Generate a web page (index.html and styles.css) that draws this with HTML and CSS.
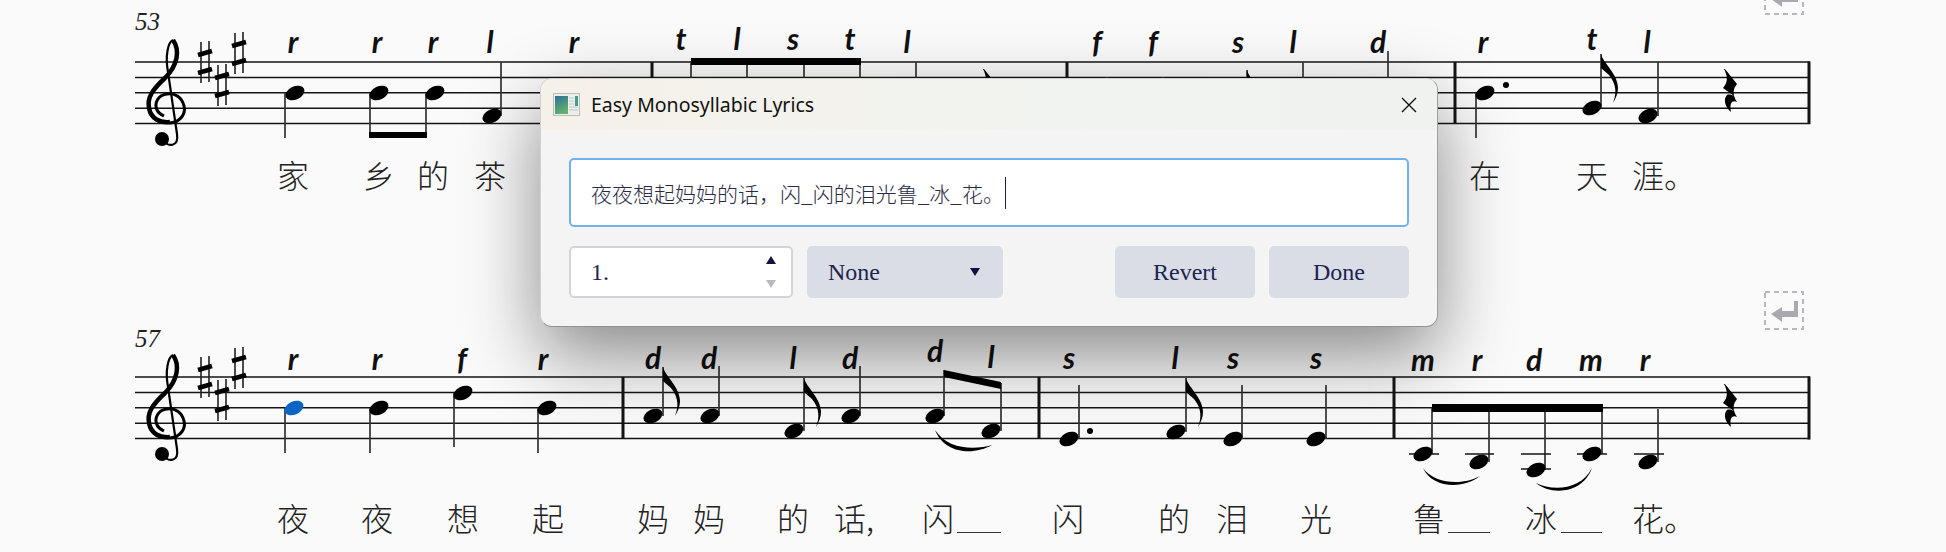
FILE: index.html
```html
<!DOCTYPE html>
<html lang="zh">

<head>
    <meta charset="UTF-8">
    <title>Easy Monosyllabic Lyrics</title>
    <link rel="stylesheet" href="styles.css">
</head>

<body>
    <!-- the score is a free canvas, everything on it sits at its own coordinates -->
    <svg class="score" width="1946" height="552" viewBox="0 0 1946 552">
        <defs>
            <ellipse id="head" rx="10" ry="6.6" transform="rotate(-25)"></ellipse>
            <path id="flag" d="M0 0C2 9 17 20 17 34C17 39 15 44 12 49C15.5 40 16 31 8 21C5 18 2 16 0 14Z"></path>
            <path id="rest" d="M0 0L1 0L13 15C9 20 8 25 13 33C9 31 5 33 7 43C1 38 -1 30 3 26C5 25 8 26 10 27L-1 19C4 13 4 8 0 0Z"></path>
            <g id="sharp">
                <path class="sharp-stem" d="M-4 -20V21M4 -21V20"></path>
                <path class="sharp-bar" d="M-7 -7L7 -11M-7 11L7 7"></path>
            </g>
            <g id="clef">
                <circle cx="162" cy="139" r="7"></circle>
                <path class="clef-thin" d="M162 139C168 148 179 147 177 134L168 72C165 56 168 42 173 40"></path>
                <path class="clef-bold" d="M173 40C180 50 178 65 165 78C152 90 147 98 149 108C151 119 160 123 170 122"></path>
                <path class="clef-mid" d="M170 123C181 122 186 113 184 106C182 97 175 93 167 94C158 95 154 103 157 110C159 114 162 115 164 116"></path>
            </g>
            <g id="return-mark">
                <rect class="return-box" x="1765" y="292" width="38" height="37"></rect>
                <path class="return-arrow" d="M1771 314L1782 307V311H1794V301H1798V317H1782V322Z"></path>
            </g>
            <g id="key">
                <use href="#clef"></use>
                <use href="#sharp" x="205" y="62"></use>
                <use href="#sharp" x="222" y="85"></use>
                <use href="#sharp" x="239" y="53"></use>
            </g>
        </defs>

        <use href="#return-mark" y="-315"></use>
        <use href="#return-mark"></use>

        <!-- system 53 -->
        <text class="measure" x="135" y="30">53</text>
        <path class="staff" d="M135 62H1810M135 77.4H1810M135 92.8H1810M135 108.2H1810M135 123.5H1810"></path>
        <use href="#key"></use>
        <path class="bar" d="M652 62V123M1067 62V123M1455 62V123M1809 61.5V124"></path>
        <path class="stem" d="M285 93V138M370 93V138M426 93V138M501 116V62"></path>
        <path class="stem" d="M691 62V90M747 62V90M804 62V90M860 62V90M916 62V90M1107 77V90M1163 77V90M1303 62V90M1388 51V90"></path>
        <path class="stem" d="M1476 93V138M1601 108V54M1658 116V62"></path>
        <path class="stem" d="M1247 70V90"></path>
        <rect x="369" y="132" width="58" height="6"></rect>
        <rect x="691" y="58" width="170" height="7"></rect>
        <use href="#rest" x="983" y="69"></use>
        <use href="#flag" x="1247" y="70"></use>
        <use href="#head" x="295" y="93"></use>
        <use href="#head" x="379" y="93"></use>
        <use href="#head" x="435" y="93"></use>
        <use href="#head" x="492" y="116"></use>
        <use href="#head" x="1485" y="93"></use>
        <circle cx="1506" cy="85" r="3"></circle>
        <use href="#head" x="1592" y="108"></use>
        <use href="#flag" x="1601" y="54"></use>
        <use href="#head" x="1648" y="116"></use>
        <use href="#rest" x="1724" y="69"></use>

        <text class="solfa" x="293" y="53">r</text>
        <text class="solfa" x="377" y="53">r</text>
        <text class="solfa" x="433" y="53">r</text>
        <text class="solfa" x="490" y="53">l</text>
        <text class="solfa" x="574" y="53">r</text>
        <text class="solfa" x="681" y="50">t</text>
        <text class="solfa" x="737" y="50">l</text>
        <text class="solfa" x="793" y="50">s</text>
        <text class="solfa" x="850" y="50">t</text>
        <text class="solfa" x="907" y="53">l</text>
        <text class="solfa" x="1097" y="53">f</text>
        <text class="solfa" x="1153" y="53">f</text>
        <text class="solfa" x="1238" y="53">s</text>
        <text class="solfa" x="1293" y="53">l</text>
        <text class="solfa" x="1378" y="53">d</text>
        <text class="solfa" x="1483" y="53">r</text>
        <text class="solfa" x="1592" y="50">t</text>
        <text class="solfa" x="1647" y="53">l</text>

        <text class="lyric" x="277" y="188">家</text>
        <text class="lyric" x="363" y="188">乡</text>
        <text class="lyric" x="417" y="188">的</text>
        <text class="lyric" x="474" y="188">茶</text>
        <text class="lyric" x="1469" y="188">在</text>
        <text class="lyric" x="1576" y="188">天</text>
        <text class="lyric" x="1632" y="188">涯。</text>

        <!-- system 57 -->
        <text class="measure" x="135" y="347">57</text>
        <path class="staff" d="M135 377H1810M135 392.4H1810M135 407.8H1810M135 423.2H1810M135 438.6H1810"></path>
        <use href="#key" y="315"></use>
        <path class="bar" d="M623 377V439M1039 377V439M1394 377V439M1809 376.5V439.5"></path>
        <path class="stem" d="M285 408V453M370 408V453M454 393V447M538 408V453"></path>
        <path class="stem" d="M663 367V416M719 366V416M804 378V431M860 366V416M944 370V416M1001 383V431M1079 385V439"></path>
        <path class="stem" d="M1186 378V432M1242 385V439M1326 385V439M1432 408V454M1489 408V462M1545 408V470M1602 408V454M1658 409V462"></path>
        <path class="ledger" d="M1409 454H1439M1465 454H1494M1521 454H1551M1521 469H1551M1577 454H1607M1634 454H1664"></path>
        <path d="M944 370L1001 382V389L944 377Z"></path>
        <rect x="1432" y="404" width="171" height="8"></rect>
        <use class="note-current" href="#head" x="294" y="408"></use>
        <use href="#head" x="379" y="408"></use>
        <use href="#head" x="463" y="393"></use>
        <use href="#head" x="547" y="408"></use>
        <use href="#head" x="653" y="416"></use>
        <use href="#flag" x="663" y="367"></use>
        <use href="#head" x="710" y="416"></use>
        <use href="#head" x="794" y="431"></use>
        <use href="#flag" x="804" y="378"></use>
        <use href="#head" x="851" y="416"></use>
        <use href="#head" x="935" y="416"></use>
        <use href="#head" x="991" y="431"></use>
        <use href="#head" x="1069" y="439"></use>
        <circle cx="1090" cy="431" r="3"></circle>
        <use href="#head" x="1176" y="432"></use>
        <use href="#flag" x="1186" y="378"></use>
        <use href="#head" x="1233" y="439"></use>
        <use href="#head" x="1316" y="439"></use>
        <use href="#head" x="1423" y="454"></use>
        <use href="#head" x="1479" y="462"></use>
        <use href="#head" x="1536" y="470"></use>
        <use href="#head" x="1592" y="454"></use>
        <use href="#head" x="1648" y="462"></use>
        <use href="#rest" x="1724" y="384"></use>
        <path d="M935 430C945 455 975 455 992 445C975 450 948 450 935 430Z"></path>
        <path d="M1423 468C1432 489 1465 489 1480 476C1465 485 1435 485 1423 468Z"></path>
        <path d="M1536 483C1550 495 1582 495 1592 468C1580 491 1552 491 1536 483Z"></path>

        <text class="solfa" x="293" y="370">r</text>
        <text class="solfa" x="377" y="370">r</text>
        <text class="solfa" x="462" y="370">f</text>
        <text class="solfa" x="543" y="370">r</text>
        <text class="solfa" x="653" y="369">d</text>
        <text class="solfa" x="709" y="369">d</text>
        <text class="solfa" x="793" y="369">l</text>
        <text class="solfa" x="850" y="369">d</text>
        <text class="solfa" x="935" y="362">d</text>
        <text class="solfa" x="991" y="368">l</text>
        <text class="solfa" x="1069" y="369">s</text>
        <text class="solfa" x="1175" y="369">l</text>
        <text class="solfa" x="1233" y="369">s</text>
        <text class="solfa" x="1316" y="369">s</text>
        <text class="solfa" x="1423" y="371">m</text>
        <text class="solfa" x="1477" y="371">r</text>
        <text class="solfa" x="1534" y="371">d</text>
        <text class="solfa" x="1591" y="371">m</text>
        <text class="solfa" x="1645" y="371">r</text>

        <text class="lyric" x="277" y="531">夜</text>
        <text class="lyric" x="361" y="531">夜</text>
        <text class="lyric" x="447" y="531">想</text>
        <text class="lyric" x="532" y="531">起</text>
        <text class="lyric" x="637" y="531">妈</text>
        <text class="lyric" x="693" y="531">妈</text>
        <text class="lyric" x="777" y="531">的</text>
        <text class="lyric" x="834" y="531">话,</text>
        <text class="lyric" x="922" y="531">闪</text>
        <text class="lyric" x="1052" y="531">闪</text>
        <text class="lyric" x="1158" y="531">的</text>
        <text class="lyric" x="1216" y="531">泪</text>
        <text class="lyric" x="1300" y="531">光</text>
        <text class="lyric" x="1413" y="531">鲁</text>
        <text class="lyric" x="1525" y="531">冰</text>
        <text class="lyric" x="1632" y="531">花。</text>
        <path class="extender" d="M957 532.5H1001M1448 532.5H1490M1561 532.5H1602"></path>
    </svg>

    <div class="dialog">
        <div class="titlebar">
            <svg class="app-icon" width="27" height="23" viewBox="0 0 27 23">
                <defs>
                    <linearGradient id="panel" x1="0" y1="0" x2="0.4" y2="1">
                        <stop offset="0" stop-color="#2f6f9a"></stop>
                        <stop offset="1" stop-color="#62b06c"></stop>
                    </linearGradient>
                </defs>
                <rect x="0" y="0" width="27" height="23" fill="#b9bdbd"></rect>
                <rect x="1" y="1" width="25" height="21" fill="#eceeea"></rect>
                <rect x="2" y="3" width="13" height="18" fill="url(#panel)"></rect>
                <rect x="22" y="3" width="3" height="10" fill="#3f9c90"></rect>
                <path d="M16 5H21M16 8H21M16 11H21M16 14H25M16 17H25" stroke="#c2c6c2" stroke-width="1.2"></path>
            </svg>
            <span class="title">Easy Monosyllabic Lyrics</span>
            <svg class="close" width="16" height="16" viewBox="0 0 16 16">
                <path d="M1 1L15 15M15 1L1 15"></path>
            </svg>
        </div>
        <div class="body">
            <div class="lyrics-input">
                <span>夜夜想起妈妈的话，闪_闪的泪光鲁_冰_花。</span><span class="caret"></span>
            </div>
            <div class="controls">
                <div class="spinner">
                    <span>1.</span>
                    <div class="spin-arrows">
                        <span class="arrow-up"></span>
                        <span class="arrow-down"></span>
                    </div>
                </div>
                <div class="combo">
                    <span>None</span>
                    <span class="combo-arrow"></span>
                </div>
                <div class="spacer"></div>
                <div class="btn">Revert</div>
                <div class="btn">Done</div>
            </div>
        </div>
    </div>
</body>

</html>
```

FILE: styles.css
```css
body {
    margin: 0;
    width: 1946px;
    height: 552px;
    overflow: hidden;
    position: relative;
    background-color: #fafafa;
    font-family: "Liberation Serif", serif;
}

.score {
    display: block;
}

.staff {
    fill: none;
    stroke: #151515;
    stroke-width: 1.5;
}

.bar {
    fill: none;
    stroke: #151515;
    stroke-width: 3;
}

.stem {
    fill: none;
    stroke: #333;
    stroke-width: 1.7;
}

.ledger {
    fill: none;
    stroke: #151515;
    stroke-width: 1.7;
}

.extender {
    fill: none;
    stroke: #333;
    stroke-width: 1.2;
}

.note-current {
    fill: #0a66c2;
}

.sharp-stem {
    fill: none;
    stroke: #222;
    stroke-width: 1.6;
}

.sharp-bar {
    fill: none;
    stroke: #000;
    stroke-width: 4.5;
}

.clef-thin,
.clef-bold,
.clef-mid {
    fill: none;
    stroke: #000;
}

.clef-thin {
    stroke-width: 2.2;
}

.clef-bold {
    stroke-width: 4.5;
}

.clef-mid {
    stroke-width: 3;
}

.return-box {
    fill: none;
    stroke: #b8b8bc;
    stroke-width: 2;
    stroke-dasharray: 5 4;
}

.return-arrow {
    fill: #a9a9ae;
}

.measure {
    font-family: "Liberation Serif", serif;
    font-style: italic;
    font-size: 25px;
    fill: #222;
}

.solfa {
    font-family: Lato, sans-serif;
    font-style: italic;
    font-weight: 700;
    font-size: 30px;
    text-anchor: middle;
    fill: #111;
}

.lyric {
    font-family: "Noto Sans CJK SC", sans-serif;
    font-weight: 300;
    font-size: 32px;
    fill: #222;
}

/* dialog over the score */
.dialog {
    position: absolute;
    left: 540px;
    top: 78px;
    width: 898px;
    height: 249px;
    box-sizing: border-box;
    background-color: #f4f4f4;
    border: 1px solid rgba(0, 0, 0, 0.14);
    border-bottom-color: rgba(0, 0, 0, 0.4);
    border-right-color: rgba(0, 0, 0, 0.35);
    border-radius: 12px;
    box-shadow: 0 28px 75px rgba(0, 0, 0, 0.46);
    overflow: hidden;
}

.titlebar {
    display: flex;
    align-items: center;
    height: 51px;
    padding-left: 12px;
    background: linear-gradient(90deg, #f5f1e9, #f1f3f0 60%, #f0f2f0);
}

.app-icon {
    margin-right: 11px;
}

.title {
    flex: 1;
    font-family: "Noto Sans", sans-serif;
    font-size: 19.5px;
    color: #111;
}

.close {
    margin-right: 20px;
}

.close path {
    fill: none;
    stroke: #111;
    stroke-width: 1.4;
}

.body {
    display: flex;
    flex-direction: column;
    gap: 19px;
    padding: 28px 28px 0 28px;
}

.lyrics-input {
    display: flex;
    align-items: center;
    height: 69px;
    box-sizing: border-box;
    padding-left: 20px;
    background-color: #fff;
    border: 2px solid #74b0ee;
    border-radius: 5px;
    font-family: "Noto Sans CJK SC", sans-serif;
    font-weight: 300;
    font-size: 21px;
    color: #2a2a45;
}

.caret {
    width: 1px;
    height: 32px;
    margin-left: 1px;
    background-color: #1c1c55;
}

.controls {
    display: flex;
    gap: 14px;
    height: 52px;
    font-size: 24px;
    color: #1d2450;
}

.spinner {
    display: flex;
    align-items: center;
    justify-content: space-between;
    width: 224px;
    box-sizing: border-box;
    padding: 0 15px 0 20px;
    background-color: #fff;
    border: 2px solid #d3d3d8;
    border-radius: 5px;
}

.spin-arrows {
    display: flex;
    flex-direction: column;
    gap: 16px;
}

.arrow-up {
    border-left: 5px solid transparent;
    border-right: 5px solid transparent;
    border-bottom: 8px solid #12123c;
}

.arrow-down {
    border-left: 5px solid transparent;
    border-right: 5px solid transparent;
    border-top: 8px solid #b9b9c2;
}

.combo {
    display: flex;
    align-items: center;
    justify-content: space-between;
    width: 196px;
    box-sizing: border-box;
    padding: 0 23px 0 21px;
    background-color: #dadde5;
    border-radius: 5px;
}

.combo-arrow {
    border-left: 5px solid transparent;
    border-right: 5px solid transparent;
    border-top: 8px solid #12123c;
}

.spacer {
    flex: 1;
}

.btn {
    display: flex;
    align-items: center;
    justify-content: center;
    width: 140px;
    background-color: #dadde5;
    border-radius: 5px;
}
```
